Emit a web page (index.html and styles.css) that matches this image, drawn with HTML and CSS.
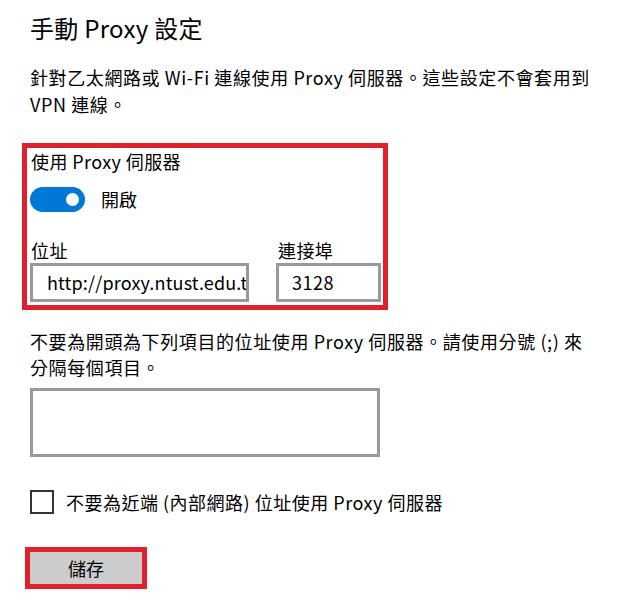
FILE: index.html
```html
<!DOCTYPE html>
<html lang="zh-Hant">
<head>
<meta charset="utf-8">
<title>手動 Proxy 設定</title>
<link rel="stylesheet" href="styles.css">
</head>
<body>
<main class="page">
  <h1 class="title">手動 Proxy 設定</h1>
  <p class="desc">針對乙太網路或 Wi-Fi 連線使用 Proxy 伺服器。這些設定不會套用到 VPN 連線。</p>

  <section class="proxy-box">
    <div class="label">使用 Proxy 伺服器</div>
    <div class="toggle-row">
      <span class="toggle"><span class="knob"></span></span>
      <span class="toggle-text">開啟</span>
    </div>
    <div class="fields">
      <div class="field field-addr">
        <div class="label">位址</div>
        <div class="input">http://proxy.ntust.edu.tw</div>
      </div>
      <div class="field field-port">
        <div class="label">連接埠</div>
        <div class="input">3128</div>
      </div>
    </div>
  </section>

  <p class="desc desc2">不要為開頭為下列項目的位址使用 Proxy 伺服器。請使用分號 (;) 來分隔每個項目。</p>
  <div class="textarea"></div>

  <label class="check-row">
    <span class="checkbox"></span>
    <span class="check-text">不要為近端 (內部網路) 位址使用 Proxy 伺服器</span>
  </label>

  <button class="save" type="button">儲存</button>
</main>
</body>
</html>
```

FILE: styles.css
```css
* { box-sizing: border-box; }

html, body {
  margin: 0;
  padding: 0;
  background: #ffffff;
}

body {
  font-family: "Noto Sans CJK TC", "Noto Sans", sans-serif;
  color: #000000;
  font-size: 18px;
}

.page {
  display: flex;
  flex-direction: column;
  align-items: flex-start;
  padding-left: 30px;
  width: 618px;
}

.title {
  margin: 12px 0 0 0;
  font-size: 24px;
  font-weight: 400;
  line-height: 32px;
  letter-spacing: 0.3px;
}

.desc {
  margin: 20px 0 0 0;
  width: 572px;
  font-size: 18px;
  line-height: 27px;
  letter-spacing: 0.6px;
}

.proxy-box {
  margin: 25px 0 0 -8px;
  width: 366px;
  border: 5px solid #e0202b;
  padding: 0 2px 3px 3px;
  display: flex;
  flex-direction: column;
}

.label {
  font-size: 18px;
  line-height: 26px;
  padding-left: 1px;
  letter-spacing: 0.4px;
}

.toggle-row {
  display: flex;
  align-items: center;
  margin-top: 13px;
  height: 25px;
}

.toggle {
  width: 55px;
  height: 25px;
  border-radius: 13px;
  background: #0078d7;
  display: flex;
  align-items: center;
  justify-content: flex-end;
  padding-right: 6px;
}

.knob {
  width: 13px;
  height: 13px;
  border-radius: 50%;
  background: #ffffff;
}

.toggle-text {
  margin-left: 16px;
  line-height: 25px;
}

.fields {
  display: flex;
  gap: 27px;
  margin-top: 25px;
}

.field-addr { width: 219px; }
.field-port { width: 105px; }

.field-port .label { padding-left: 2px; }

.input {
  height: 39px;
  border: 3px solid #999999;
  padding-left: 14px;
  line-height: 33px;
  white-space: nowrap;
  overflow: hidden;
  font-size: 18px;
  letter-spacing: 0.15px;
}

.field-port .input { padding-left: 13px; letter-spacing: 0.5px; }

.desc2 {
  margin-top: 18px;
  width: 560px;
  line-height: 26px;
}

.textarea {
  margin-top: 8px;
  width: 350px;
  height: 69px;
  border: 3px solid #999999;
}

.check-row {
  display: flex;
  align-items: center;
  margin-top: 33px;
  height: 24px;
}

.checkbox {
  width: 24px;
  height: 24px;
  border: 2px solid #333333;
  background: #ffffff;
}

.check-text {
  margin-left: 12px;
  line-height: 24px;
  letter-spacing: 0.5px;
}

.save {
  margin: 33px 0 0 -5px;
  width: 122px;
  height: 42px;
  border: 5px solid #e0202b;
  background: #cccccc;
  font-family: inherit;
  font-size: 18px;
  color: #000000;
  padding: 0;
  line-height: 30px;
}
```
